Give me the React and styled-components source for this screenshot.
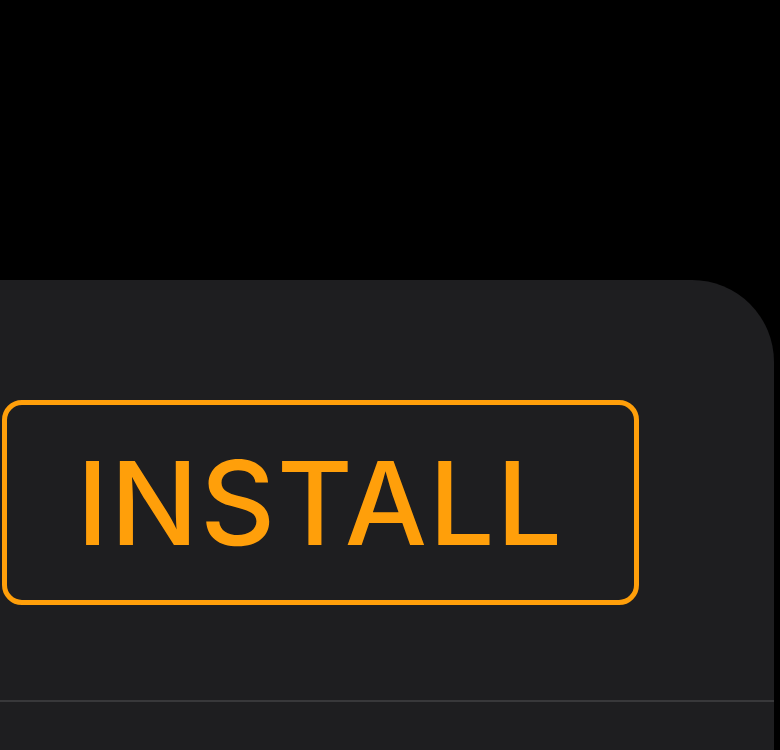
import React from "react";
import styled, { createGlobalStyle } from "styled-components";

const GlobalStyle = createGlobalStyle`
  html, body {
    margin: 0;
    padding: 0;
    background: #000;
  }
  body {
    font-family: Inter, "Liberation Sans", sans-serif;
    overflow: hidden;
  }
`;

const Page = styled.div`
  width: 780px;
  height: 750px;
  background: #000;
  padding-top: 280px;
  box-sizing: border-box;
  overflow: hidden;
`;

const Card = styled.div`
  width: 774px;
  height: 470px;
  background: #1e1e20;
  border-radius: 0 82px 0 0;
  padding-top: 120px;
  box-sizing: border-box;
  display: flex;
  flex-direction: column;
`;

const InstallButton = styled.button`
  margin-left: 2px;
  width: 637px;
  height: 205px;
  box-sizing: border-box;
  border: 5px solid #ff9f0a;
  border-radius: 20px;
  background: transparent;
  color: #ff9f0a;
  font-family: Inter, "Liberation Sans", sans-serif;
  font-size: 116px;
  font-weight: 500;
  letter-spacing: 2px;
  line-height: 1;
  display: flex;
  align-items: center;
  justify-content: center;
  padding: 0;
  cursor: pointer;
`;

const Divider = styled.hr`
  margin: 95px 0 0 0;
  border: none;
  height: 2px;
  background: #38383a;
`;

export default function App() {
  return (
    <>
      <GlobalStyle />
      <Page>
        <Card>
          <InstallButton>INSTALL</InstallButton>
          <Divider />
        </Card>
      </Page>
    </>
  );
}
